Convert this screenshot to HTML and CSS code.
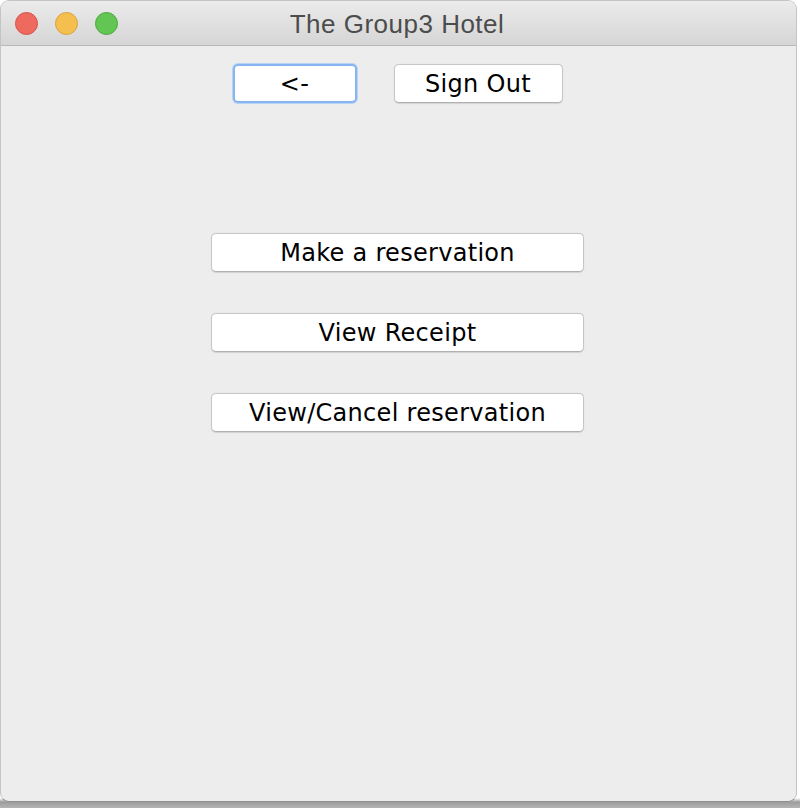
FILE: index.html
```html
<!DOCTYPE html>
<html>
<head>
<meta charset="utf-8">
<link rel="stylesheet" href="styles.css">
</head>
<body>
<div class="window">
  <div class="titlebar">
    <div class="lights">
      <span class="light red"></span>
      <span class="light yellow"></span>
      <span class="light green"></span>
    </div>
    <div class="title">The Group3 Hotel</div>
  </div>
  <div class="content">
    <div class="toprow">
      <button class="btn back focused">&lt;-</button>
      <button class="btn signout">Sign Out</button>
    </div>
    <div class="menu">
      <button class="btn wide">Make a reservation</button>
      <button class="btn wide">View Receipt</button>
      <button class="btn wide">View/Cancel reservation</button>
    </div>
  </div>
</div>
</body>
</html>
```
FILE: styles.css
```css
html, body {
  margin: 0;
  padding: 0;
  width: 800px;
  height: 808px;
  overflow: hidden;
}
body {
  background: linear-gradient(to bottom, #ffffff 0, #ffffff 798px, #9c9c9c 802px, #b4b4b4 808px);
}
.window {
  width: 797px;
  height: 802px;
  background: #ededed;
  border-radius: 9px;
  box-sizing: border-box;
  border: 1px solid #c4c4c4;
  border-bottom-color: #8e8e8e;
  overflow: hidden;
  display: flex;
  flex-direction: column;
}
.titlebar {
  height: 45px;
  flex: none;
  box-sizing: border-box;
  background: linear-gradient(to bottom, #ebebeb, #d5d5d5);
  border-bottom: 1px solid #b9b9b9;
  display: flex;
  align-items: center;
  position: relative;
}
.lights {
  display: flex;
  gap: 17px;
  padding-left: 14px;
}
.light {
  width: 23px;
  height: 23px;
  border-radius: 50%;
  box-sizing: border-box;
}
.red { background: #ee6a5f; border: 1px solid #d6524a; }
.yellow { background: #f5bf4f; border: 1px solid #d7a23c; }
.green { background: #62c554; border: 1px solid #4da83f; }
.title {
  position: absolute;
  left: 0;
  right: 0;
  top: 0;
  bottom: 0;
  display: flex;
  align-items: center;
  justify-content: center;
  font-family: "Liberation Sans", Arial, sans-serif;
  font-size: 26px;
  letter-spacing: 0.5px;
  color: #4c4c4c;
  padding-top: 3px;
  padding-right: 3px;
}
.content {
  flex: 1;
  display: flex;
  flex-direction: column;
  align-items: center;
  padding-top: 18px;
  padding-right: 2px;
}
.toprow {
  display: flex;
  gap: 37px;
}
.btn {
  font-family: "DejaVu Sans", "Noto Sans", sans-serif;
  font-size: 24px;
  letter-spacing: 0.3px;
  color: #000;
  background: #ffffff;
  border: 1px solid #c6c6c6;
  border-bottom-color: #b0b0b0;
  border-radius: 5px;
  height: 39px;
  padding: 0;
  margin: 0;
  box-sizing: border-box;
  line-height: 36px;
  box-shadow: 0 0.5px 1px rgba(0,0,0,0.12);
}
.back { width: 124px; }
.signout { width: 169px; }
.focused {
  border: 2px solid #88b5ef;
  box-shadow: 0 0 0 1px #b7d3f6;
  line-height: 34px;
}
.menu {
  margin-top: 130px;
  display: flex;
  flex-direction: column;
  gap: 41px;
}
.wide { width: 373px; }
```
